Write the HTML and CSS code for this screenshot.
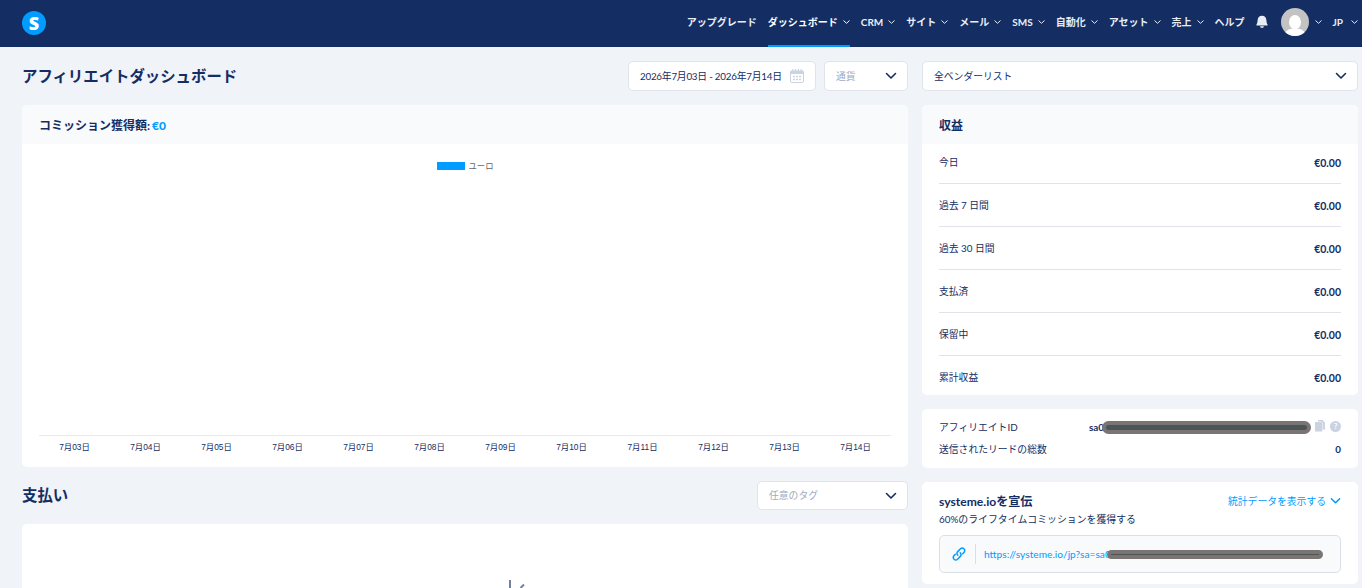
FILE: index.html
```
<!DOCTYPE html>
<html lang="ja">

<head>
  <meta charset="UTF-8">
  <meta name="viewport" content="width=device-width, initial-scale=1.0">
  <title>アフィリエイトダッシュボード</title>
  <link rel="stylesheet" href="styles.css">
</head>

<body>
  <svg width="0" height="0" class="sprite">
    <symbol id="caret" viewBox="0 0 7 4">
      <path d="M.5.5l3 2.8 3-2.8" fill="none" stroke="currentColor" stroke-width="1" />
    </symbol>
    <symbol id="chevron" viewBox="0 0 12 8">
      <path d="M1.5 1.5L6 6l4.500-4.500" fill="none" stroke="currentColor" stroke-width="1.600" stroke-linecap="round" stroke-linejoin="round" />
    </symbol>
  </svg>

  <header class="navbar">
    <a class="logo" href="#">S</a>
    <nav class="menu">
      <a href="#">アップグレード</a>
      <a href="#" class="active">ダッシュボード<svg class="caret"><use href="#caret" /></svg></a>
      <a href="#">CRM<svg class="caret"><use href="#caret" /></svg></a>
      <a href="#">サイト<svg class="caret"><use href="#caret" /></svg></a>
      <a href="#">メール<svg class="caret"><use href="#caret" /></svg></a>
      <a href="#">SMS<svg class="caret"><use href="#caret" /></svg></a>
      <a href="#">自動化<svg class="caret"><use href="#caret" /></svg></a>
      <a href="#">アセット<svg class="caret"><use href="#caret" /></svg></a>
      <a href="#">売上<svg class="caret"><use href="#caret" /></svg></a>
      <a href="#">ヘルプ</a>
      <a href="#" class="bell">
        <svg width="12" height="14" viewBox="0 0 12 14">
          <path d="M6 .8C3.200.8 1.700 2.800 1.600 5.200 1.500 7.600 1 8.500.5 9.400c-.3.700 0 1.200.7 1.200h9.600c.7 0 1-.5.7-1.200-.5-.9-1-1.800-1.100-4.200C10.300 2.800 8.800.8 6 .8zM4 11.300h4c-.2 1-1 1.600-2 1.600s-1.800-.6-2-1.600z" fill="currentColor" />
        </svg>
      </a>
      <a href="#" class="account">
        <svg width="28" height="28" viewBox="0 0 28 28">
          <clipPath id="round"><circle cx="14" cy="14" r="14" /></clipPath>
          <g clip-path="url(#round)">
            <rect width="28" height="28" fill="#c3c3c3" />
            <ellipse cx="14" cy="14.200" rx="6" ry="7.300" fill="#fff" />
            <path d="M3 28c.5-4.500 3.500-6.500 7.500-7.300h7c4 .8 7 2.800 7.500 7.300z" fill="#fff" />
          </g>
        </svg>
        <svg class="caret"><use href="#caret" /></svg>
      </a>
      <a href="#" class="lang">JP<svg class="caret"><use href="#caret" /></svg></a>
    </nav>
  </header>

  <main class="page">
    <section class="left">
      <div class="toolbar">
        <h1>アフィリエイトダッシュボード</h1>
        <div class="field date">
          <span>2026年7月03日 - 2026年7月14日</span>
          <svg width="14" height="14" viewBox="0 0 14 14">
            <path d="M0 3.200Q0 1.500 1.500 1.500h11Q14 1.500 14 3.200V5H0z" fill="#ccd3e0" />
            <path d="M2.800 0v2M5.600 0v2M8.400 0v2M11.200 0v2" stroke="#ccd3e0" stroke-width="1.200" />
            <path d="M.5 5v7q0 1.500 1.500 1.500h10q1.500 0 1.500-1.500V5" fill="none" stroke="#ccd3e0" />
            <path d="M3 7.500h2M6 7.500h2M9 7.500h2M3 10.500h2M6 10.500h2M9 10.500h2" stroke="#ccd3e0" stroke-width="1.300" />
          </svg>
        </div>
        <div class="field currency">
          <span>通貨</span>
          <svg class="chevron"><use href="#chevron" /></svg>
        </div>
      </div>

      <div class="card chart-card">
        <h2 class="card-title">コミッション獲得額: <b>€0</b></h2>
        <div class="chart">
          <div class="legend"><i></i>ユーロ</div>
          <div class="plot"></div>
          <div class="labels">
            <span>7月03日</span>
            <span>7月04日</span>
            <span>7月05日</span>
            <span>7月06日</span>
            <span>7月07日</span>
            <span>7月08日</span>
            <span>7月09日</span>
            <span>7月10日</span>
            <span>7月11日</span>
            <span>7月12日</span>
            <span>7月13日</span>
            <span>7月14日</span>
          </div>
        </div>
      </div>

      <div class="toolbar payments">
        <h1>支払い</h1>
        <div class="field tag">
          <span>任意のタグ</span>
          <svg class="chevron"><use href="#chevron" /></svg>
        </div>
      </div>

      <div class="card empty">
        <svg width="40" height="9" viewBox="0 0 40 9">
          <path d="M15 1v8M29 5.500L25.500 9" fill="none" stroke="#71809c" stroke-width="2" />
        </svg>
      </div>
    </section>

    <aside class="right">
      <div class="field vendor">
        <span>全ベンダーリスト</span>
        <svg class="chevron"><use href="#chevron" /></svg>
      </div>

      <div class="card earnings">
        <h2 class="card-title">収益</h2>
        <ul>
          <li>今日<b>€0.00</b></li>
          <li>過去 7 日間<b>€0.00</b></li>
          <li>過去 30 日間<b>€0.00</b></li>
          <li>支払済<b>€0.00</b></li>
          <li>保留中<b>€0.00</b></li>
          <li>累計収益<b>€0.00</b></li>
        </ul>
      </div>

      <div class="card affiliate">
        <div class="row">
          <span>アフィリエイトID</span>
          <div class="id">
            <b>sa0</b><i class="mask"></i>
            <svg class="copy" width="10" height="12" viewBox="0 0 10 12">
              <path d="M3 0h4.500L10 2.500V9.500H3z" fill="#ccd3e0" />
              <path d="M0 2h7.300v9.500H0z" fill="#ccd3e0" />
              <path d="M2.700 1.700h3.600l1.300 1.500v6.600" fill="none" stroke="#fff" stroke-width=".5" />
            </svg>
            <span class="help">?</span>
          </div>
        </div>
        <div class="row">
          <span>送信されたリードの総数</span>
          <b>0</b>
        </div>
      </div>

      <div class="card promo">
        <div class="promo-head">
          <h3>systeme.ioを宣伝</h3>
          <a href="#">統計データを表示する<svg class="chevron"><use href="#chevron" /></svg></a>
        </div>
        <p>60%のライフタイムコミッションを獲得する</p>
        <div class="link-box">
          <svg width="14" height="14" viewBox="0 0 14 14">
            <g fill="none" stroke="#009cff" stroke-width="1.500" stroke-linecap="round">
              <path d="M5.800 8.200C4.600 7 4.700 5.600 5.700 4.600l2.800-2.800c2.300-2 5.500.9 3.600 3.500L10.600 6.800" />
              <path d="M8.200 5.800C9.400 7 9.300 8.400 8.300 9.400l-2.800 2.800C3.200 14.200 0 11.300 1.900 8.700L3.400 7.200" />
            </g>
          </svg>
          <span class="url">https://systeme.io/jp?sa=sa0</span><i class="mask"></i>
        </div>
      </div>
    </aside>
  </main>
</body>

</html>
```
FILE: styles.css
```
* {
  box-sizing: border-box;
}

body {
  margin: 0;
  height: 588px;
  overflow: hidden;
  background-color: #f0f3f8;
  color: #142d63;
  font-family: Lato, "Noto Sans CJK JP", sans-serif;
  font-size: 9.8px;
  line-height: 15px;
}

h1, h2, h3, p, ul {
  margin: 0;
  padding: 0;
}

a {
  color: inherit;
  text-decoration: none;
}

svg {
  display: block;
  flex: none;
}

.sprite {
  position: absolute;
}

.caret {
  width: 7px;
  height: 4px;
  margin-left: 5px;
}

.chevron {
  width: 12px;
  height: 8px;
}

/* header */
.navbar {
  display: flex;
  justify-content: space-between;
  height: 47px;
  padding: 0 4px 0 22px;
  background-color: #142d63;
  color: #e9edf5;
}

.logo {
  width: 24px;
  height: 24px;
  margin-top: 11px;
  border-radius: 50%;
  background-color: #009cff;
  color: #fff;
  font: 800 18px/24px "Open Sans", sans-serif;
  text-align: center;
}

.menu {
  display: flex;
  gap: 11px;
  height: 47px;
  font-size: 10px;
  font-weight: 700;
}

.menu a {
  display: flex;
  align-items: center;
  padding-bottom: 1px;
  border-bottom: 2px solid transparent;
  white-space: nowrap;
}

.menu a.active {
  color: #fff;
  border-bottom-color: #009cff;
}

.menu .bell {
  margin-left: 0;
}

.menu .account {
  padding-bottom: 1px;
  margin-left: 2px;
}

.menu .account .caret {
  margin-left: 6px;
}

.menu .lang .caret {
  margin-left: 8px;
}

/* columns */
.page {
  display: flex;
  gap: 14px;
  padding: 14px 4px 0 22px;
}

.left {
  width: 886px;
}

.right {
  width: 436px;
}

.toolbar {
  display: flex;
  align-items: center;
  gap: 8px;
  height: 30px;
  margin-bottom: 14px;
}

.toolbar h1 {
  margin-right: auto;
  font-size: 15.400px;
  line-height: 24px;
}

.field {
  display: flex;
  justify-content: space-between;
  align-items: center;
  height: 30px;
  padding: 0 10px 0 11px;
  border: 1px solid #dfe4ec;
  border-radius: 5px;
  background-color: #fff;
}

.date {
  width: 188px;
  padding-right: 11px;
  letter-spacing: -.23px;
}

.currency {
  width: 84px;
  color: #a1abc0;
}

.tag {
  width: 151px;
  height: 29px;
  color: #a1abc0;
}

.field .chevron {
  color: #142d63;
}

.vendor {
  margin-bottom: 14px;
}

.card {
  margin-bottom: 14px;
  border-radius: 5px;
  background-color: #fff;
}

.card-title {
  height: 39px;
  padding: 0 17px;
  border-radius: 5px 5px 0 0;
  background-color: #f9fafc;
  font-size: 12px;
  line-height: 41px;
}

.card-title b {
  margin-left: -1px;
  color: #009cff;
}

/* chart */
.chart-card {
  height: 362px;
}

.chart {
  padding: 17px 17px 0;
}

.legend {
  display: flex;
  justify-content: center;
  align-items: center;
  gap: 4px;
  height: 10px;
  color: #666;
  font-size: 8.300px;
}

.legend i {
  width: 28px;
  height: 8px;
  background-color: #009cff;
}

.plot {
  height: 265px;
  border-bottom: 1px solid #e9e9e9;
}

.labels {
  display: grid;
  grid-template-columns: repeat(12, 71px);
  padding-top: 4px;
  font-family: "Liberation Sans", "Noto Sans CJK JP", sans-serif;
  font-size: 8.400px;
  text-align: center;
}

.payments {
  height: 29px;
}

.payments h1 {
  margin-top: -1px;
}

.empty {
  display: flex;
  justify-content: center;
  height: 64px;
  margin-bottom: 0;
  padding: 55px 0 0 100px;
  border-radius: 5px 5px 0 0;
}

/* earnings */
.earnings {
  height: 290px;
}

.earnings ul {
  padding: 0 17px;
  list-style: none;
}

.earnings li {
  display: flex;
  justify-content: space-between;
  padding: 14px 0 13px;
  border-bottom: 1px solid #e0e3e8;
}

.earnings li:first-child {
  padding-top: 11px;
}

.earnings li:last-child {
  padding-bottom: 10px;
  border-bottom: 0;
}

.earnings b {
  font-size: 10.500px;
  line-height: 16px;
  margin-bottom: -1px;
}

.affiliate {
  height: 59px;
  padding: 11px 17px 0;
}

.row {
  display: flex;
  justify-content: space-between;
  height: 22px;
}

.id {
  display: flex;
  height: 15px;
}

.mask {
  border-radius: 7px;
  background-color: #4a5459;
  border: 4px solid #7a7473;
}

.id .mask {
  width: 209px;
  height: 13px;
  margin: 1px 4px 0 -2px;
}

.help {
  width: 11px;
  height: 11px;
  margin: 1px 0 0 5px;
  border-radius: 50%;
  background-color: #ccd3e0;
  color: #fff;
  font-size: 8px;
  font-weight: 700;
  line-height: 11px;
  text-align: center;
}

/* promo */
.promo {
  height: 102px;
  margin-bottom: 0;
  padding: 11px 17px 0;
}

.promo-head {
  display: flex;
  justify-content: space-between;
}

.promo h3 {
  font-size: 12.100px;
  line-height: 18px;
}

.promo-head a {
  display: flex;
  align-items: center;
  gap: 4px;
  height: 16px;
  color: #009cff;
}

.promo-head .chevron {
  width: 11px;
}

.promo p {
  padding-top: 1px;
  font-size: 9.900px;
}

.link-box {
  display: flex;
  align-items: center;
  height: 38px;
  margin-top: 8px;
  padding-left: 12px;
  border: 1px solid #dadfe7;
  border-radius: 5px;
  background-color: #f9fafc;
}

.url {
  height: 20px;
  margin-left: 9px;
  padding-left: 8px;
  border-left: 1px solid #dadfe7;
  color: #009cff;
  font-size: 10.200px;
  line-height: 20px;
}

.link-box .mask {
  width: 216px;
  height: 9px;
  margin-left: -4px;
}
```
